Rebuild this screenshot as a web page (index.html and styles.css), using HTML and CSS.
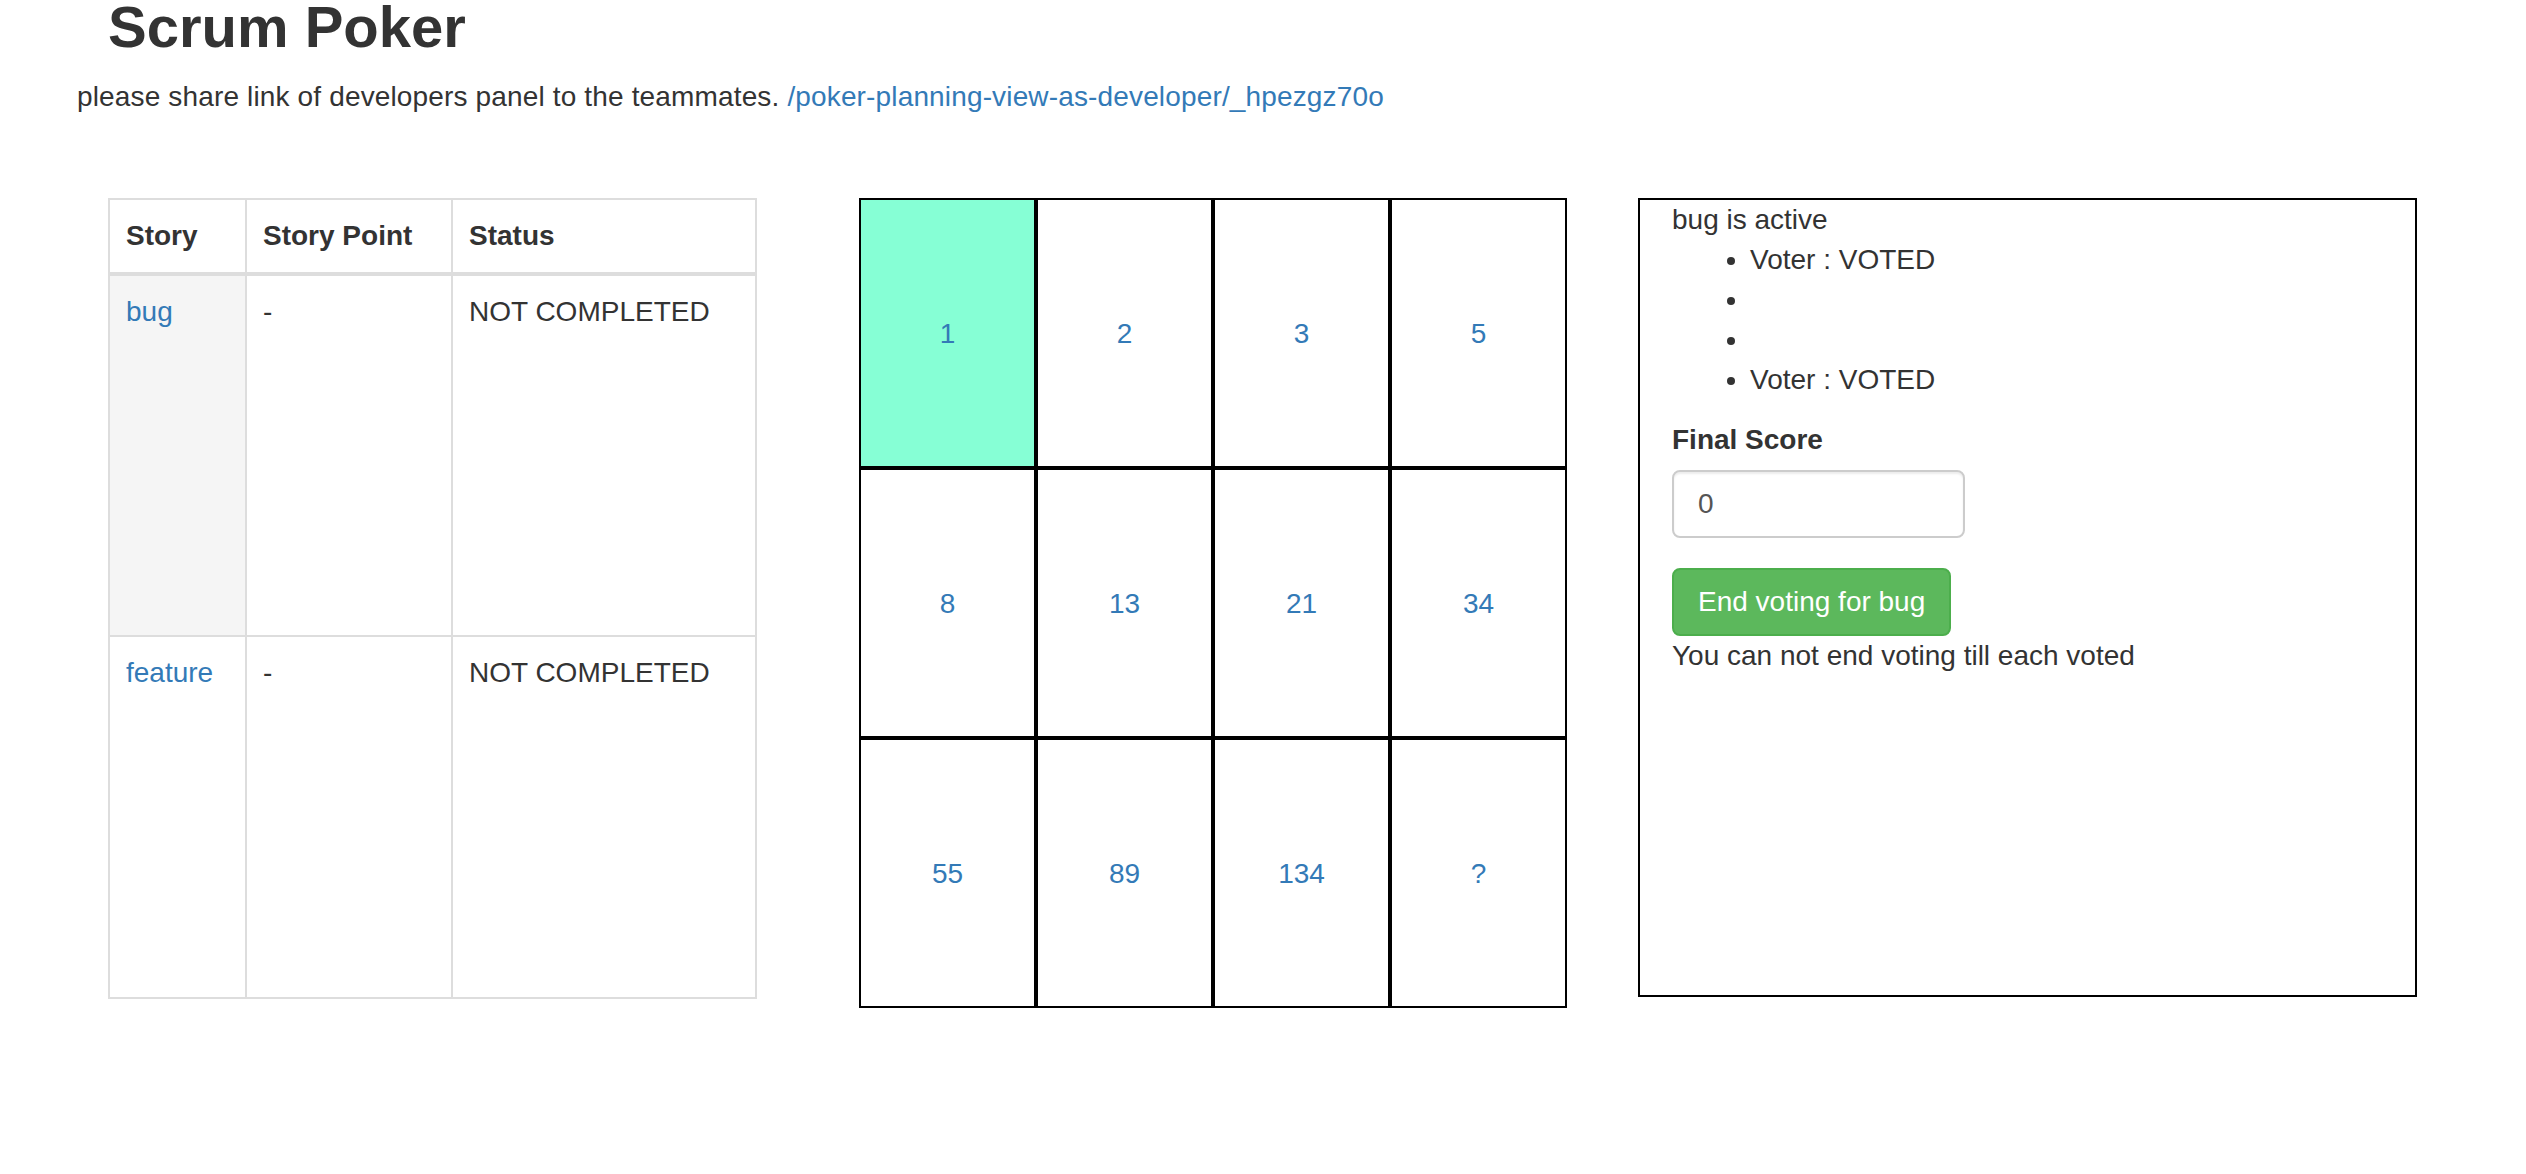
FILE: index.html
```html
<!DOCTYPE html>
<html>
<head>
<meta charset="utf-8">
<title>Scrum Poker</title>
<link rel="stylesheet" href="styles.css">
</head>
<body>
<h1 class="title">Scrum Poker</h1>
<p class="share">please share link of developers panel to the teammates. <a href="#">/poker-planning-view-as-developer/_hpezgz70o</a></p>
<div class="main">
  <table class="stories">
    <thead>
      <tr><th class="c1">Story</th><th class="c2">Story Point</th><th class="c3">Status</th></tr>
    </thead>
    <tbody>
      <tr class="row"><td class="active"><a href="#">bug</a></td><td>-</td><td>NOT COMPLETED</td></tr>
      <tr class="row"><td><a href="#">feature</a></td><td>-</td><td>NOT COMPLETED</td></tr>
    </tbody>
  </table>
  <div class="cards">
    <div class="card selected"><a href="#">1</a></div>
    <div class="card"><a href="#">2</a></div>
    <div class="card"><a href="#">3</a></div>
    <div class="card"><a href="#">5</a></div>
    <div class="card"><a href="#">8</a></div>
    <div class="card"><a href="#">13</a></div>
    <div class="card"><a href="#">21</a></div>
    <div class="card"><a href="#">34</a></div>
    <div class="card"><a href="#">55</a></div>
    <div class="card"><a href="#">89</a></div>
    <div class="card"><a href="#">134</a></div>
    <div class="card"><a href="#">?</a></div>
  </div>
  <div class="panel">
    <div>bug is active</div>
    <ul class="voters">
      <li>Voter : VOTED</li>
      <li>&nbsp;</li>
      <li>&nbsp;</li>
      <li>Voter : VOTED</li>
    </ul>
    <div class="form-group">
      <label class="label">Final Score</label>
      <input class="score" type="text" value="0">
    </div>
    <button class="btn-success">End voting for bug</button>
    <div>You can not end voting till each voted</div>
  </div>
</div>
</body>
</html>
```

FILE: styles.css
```css
html, body {
  margin: 0;
  padding: 0;
  background: #fff;
}
body {
  font-family: "Liberation Sans", Arial, sans-serif;
  font-size: 28px;
  line-height: 40px;
  color: #333;
}
a {
  color: #337ab7;
  text-decoration: none;
}
.title {
  margin: -5px 0 0 108px;
  font-size: 58px;
  line-height: 64px;
  font-weight: 700;
  color: #333;
}
.share {
  margin: 18px 0 0 77px;
  letter-spacing: 0.15px;
}
.main {
  display: flex;
  align-items: flex-start;
  margin-top: 81px;
  padding-left: 108px;
}
.stories {
  width: 649px;
  border-collapse: collapse;
  border: 2px solid #ddd;
  flex: none;
}
.stories th, .stories td {
  border: 2px solid #ddd;
  padding: 16px 16px;
  text-align: left;
  vertical-align: top;
}
.stories th {
  font-weight: 700;
  border-bottom: 4px solid #ddd;
  vertical-align: bottom;
  height: 40px;
}
.stories .c1 { width: 103px; }
.stories .c2 { width: 172px; }
.stories .row { height: 362px; }
.stories td.active { background: #f5f5f5; }
.cards {
  flex: none;
  margin-left: 102px;
  width: 708px;
  display: grid;
  grid-template-columns: repeat(4, 177px);
  grid-auto-rows: 270px;
}
.card {
  box-sizing: border-box;
  border: 2px solid #000;
  display: flex;
  align-items: center;
  justify-content: center;
  padding-top: 2px;
}
.card.selected {
  background: #86ffd5;
}
.panel {
  flex: none;
  box-sizing: border-box;
  margin-left: 71px;
  width: 779px;
  height: 799px;
  border: 2px solid #000;
  padding: 0 32px;
}
.voters {
  margin: 0 0 20px;
  padding-left: 78px;
}
.form-group {
  margin-bottom: 30px;
}
.label {
  display: inline-block;
  font-weight: 700;
  margin-bottom: 10px;
}
.score {
  display: block;
  box-sizing: border-box;
  width: 293px;
  height: 68px;
  padding: 12px 24px;
  font-family: "Liberation Sans", Arial, sans-serif;
  font-size: 28px;
  line-height: 40px;
  color: #555;
  background: #fff;
  border: 2px solid #ccc;
  border-radius: 8px;
  box-shadow: inset 0 2px 2px rgba(0,0,0,.075);
}
.btn-success {
  display: inline-block;
  padding: 12px 24px;
  font-family: "Liberation Sans", Arial, sans-serif;
  font-size: 28px;
  line-height: 40px;
  color: #fff;
  background: #5cb85c;
  border: 2px solid #4cae4c;
  border-radius: 8px;
  cursor: pointer;
}
```
